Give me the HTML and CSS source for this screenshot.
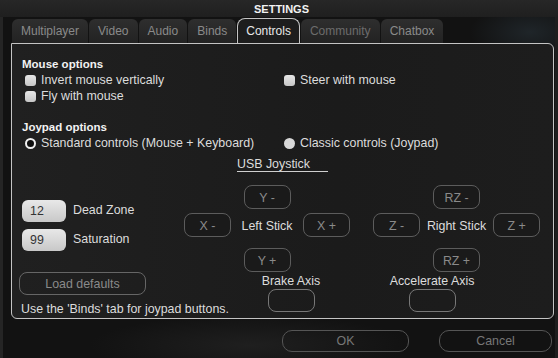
FILE: index.html
```html
<!DOCTYPE html>
<html>
<head>
<meta charset="utf-8">
<link rel="stylesheet" href="styles.css">
</head>
<body>
<div class="window">
  <div class="titlebar">SETTINGS</div>
  <div class="tabs">
    <div class="tab">Multiplayer</div>
    <div class="tab">Video</div>
    <div class="tab">Audio</div>
    <div class="tab">Binds</div>
    <div class="tab active">Controls</div>
    <div class="tab dim">Community</div>
    <div class="tab">Chatbox</div>
  </div>
  <div class="panel">
    <div class="heading first">Mouse options</div>
    <div class="opts">
      <div class="check"><span class="box"></span>Invert mouse vertically</div>
      <div class="check"><span class="box"></span>Steer with mouse</div>
      <div class="check"><span class="box"></span>Fly with mouse</div>
    </div>
    <div class="heading joy">Joypad options</div>
    <div class="opts">
      <div class="check"><span class="radio on"></span>Standard controls (Mouse + Keyboard)</div>
      <div class="check"><span class="radio"></span>Classic controls (Joypad)</div>
    </div>
    <div class="usb">USB Joystick</div>
    <div class="sticks">
      <div class="fields">
        <div class="field"><div class="input">12</div><span>Dead Zone</span></div>
        <div class="field"><div class="input">99</div><span>Saturation</span></div>
      </div>
      <div class="stick">
        <div class="jb top">Y -</div>
        <div class="jb left">X -</div>
        <div class="stick-label">Left Stick</div>
        <div class="jb right">X +</div>
        <div class="jb bottom">Y +</div>
      </div>
      <div class="stick second">
        <div class="jb top">RZ -</div>
        <div class="jb left">Z -</div>
        <div class="stick-label">Right Stick</div>
        <div class="jb right">Z +</div>
        <div class="jb bottom">RZ +</div>
      </div>
    </div>
    <div class="bottom">
      <div class="left-col">
        <div class="btn-load">Load defaults</div>
        <div class="hint">Use the 'Binds' tab for joypad buttons.</div>
      </div>
      <div class="axis">
        <div class="axis-label">Brake Axis</div>
        <div class="axis-box"></div>
      </div>
      <div class="axis accel">
        <div class="axis-label">Accelerate Axis</div>
        <div class="axis-box"></div>
      </div>
    </div>
  </div>
  <div class="footer">
    <div class="fbtn ok">OK</div>
    <div class="fbtn cancel">Cancel</div>
  </div>
</div>
</body>
</html>
```
FILE: styles.css
```css
html, body {
  margin: 0;
  padding: 0;
}
body {
  width: 558px;
  height: 358px;
  overflow: hidden;
  background: #121212;
  font-family: "Liberation Sans", Arial, sans-serif;
  font-size: 12.4px;
  color: #dcdcdc;
}
.window {
  width: 558px;
  height: 358px;
  display: flex;
  flex-direction: column;
  background:
    radial-gradient(ellipse 60px 30px at 530px 32px, #1f2529 0%, rgba(31,37,41,0) 100%),
    radial-gradient(ellipse 160px 30px at 250px 345px, #1f1f1f 0%, rgba(31,31,31,0) 100%),
    #121212;
  box-shadow: inset 3px 0 0 #252525, inset -3px 0 0 #1e1e1e;
}
.titlebar {
  height: 17px;
  line-height: 18px;
  background: linear-gradient(#272727, #1f1f1f);
  text-align: center;
  padding-left: 5px;
  font-weight: bold;
  font-size: 11px;
  color: #f2f2f2;
}
.tabs {
  display: flex;
  align-items: flex-end;
  gap: 1px;
  height: 24px;
  margin-top: 2px;
  padding-left: 12px;
  font-size: 12px;
}
.tab {
  box-sizing: border-box;
  height: 24px;
  line-height: 25px;
  padding: 0 9px;
  border-radius: 6px 6px 0 0;
  background: linear-gradient(#2e2e2e, #222222);
  color: #8a8a8a;
}
.tab.dim {
  color: #6c6c6c;
}
.tab.active {
  height: 25px;
  padding: 0 8px;
  border: 1px solid #c4c4c4;
  border-bottom: none;
  border-radius: 8px 8px 0 0;
  background: #1d1d1d;
  color: #e8e8e8;
}
.panel {
  box-sizing: border-box;
  width: 543px;
  height: 276px;
  margin-left: 11px;
  border: 1px solid #c4c4c4;
  border-radius: 0 6px 6px 6px;
  background: linear-gradient(90deg, #202020, #1b1b1b 60%, #1d1d1d);
}
.heading {
  font-weight: bold;
  font-size: 11.5px;
  line-height: 16px;
  padding-left: 10px;
  color: #f2f2f2;
}
.heading.first {
  margin-top: 12px;
}
.heading.joy {
  margin-top: 15px;
}
.opts {
  display: grid;
  grid-template-columns: 259px 1fr;
  padding-left: 13px;
}
.check {
  display: flex;
  align-items: center;
  gap: 5px;
  height: 16px;
  line-height: 17px;
  white-space: nowrap;
}
.box {
  width: 11px;
  height: 11px;
  border-radius: 3px;
  background: linear-gradient(#e6e6e6, #c6c6c6);
}
.radio {
  box-sizing: border-box;
  width: 11px;
  height: 11px;
  border-radius: 50%;
  background: #d8d8d8;
}
.radio.on {
  background: #0e0e0e;
  border: 2.5px solid #f0f0f0;
}
.usb {
  box-sizing: border-box;
  width: 91px;
  height: 16px;
  margin: 5px 0 0 225px;
  line-height: 17px;
  border-bottom: 1px solid #cfcfcf;
  white-space: nowrap;
}
.sticks {
  display: flex;
  height: 80px;
  margin-top: 13px;
}
.fields {
  box-sizing: border-box;
  width: 172px;
  padding-left: 10px;
  display: flex;
  flex-direction: column;
  justify-content: center;
  gap: 6px;
}
.field {
  display: flex;
  align-items: center;
  gap: 7px;
  line-height: 23px;
}
.input {
  box-sizing: border-box;
  width: 44px;
  height: 22px;
  line-height: 23px;
  padding-left: 8px;
  border-radius: 6px;
  background: linear-gradient(#e8e8e8, #c8c8c8);
  color: #333;
}
.stick {
  display: grid;
  grid-template-columns: 47px 72px 47px;
  grid-template-rows: 24px 24px 24px;
  row-gap: 4px;
}
.stick.second {
  margin-left: 23px;
  grid-template-columns: 47px 73px 47px;
}
.jb {
  box-sizing: border-box;
  width: 47px;
  height: 24px;
  padding-top: 1px;
  border: 1px solid #5c5c5c;
  border-radius: 8px;
  background: #1a1a1a;
  color: #8a8a8a;
  display: flex;
  align-items: center;
  justify-content: center;
}
.jb.top { grid-column: 2; grid-row: 1; justify-self: center; }
.jb.left { grid-column: 1; grid-row: 2; }
.jb.right { grid-column: 3; grid-row: 2; }
.jb.bottom { grid-column: 2; grid-row: 3; justify-self: center; }
.stick-label {
  grid-column: 2;
  grid-row: 2;
  padding-top: 2px;
  display: flex;
  align-items: center;
  justify-content: center;
  white-space: nowrap;
}
.bottom {
  display: flex;
  margin-top: 7px;
}
.left-col {
  box-sizing: border-box;
  width: 234px;
  padding-left: 7px;
}
.btn-load {
  box-sizing: border-box;
  width: 127px;
  height: 23px;
  line-height: 22px;
  border: 1px solid #666;
  border-radius: 8px;
  text-align: center;
  color: #8a8a8a;
}
.hint {
  margin: 5px 0 0 2px;
  line-height: 18px;
  white-space: nowrap;
}
.axis {
  width: 90px;
  text-align: center;
}
.axis.accel {
  width: 100px;
  margin-left: 46px;
}
.axis-label {
  height: 15px;
  line-height: 18px;
  white-space: nowrap;
}
.axis-box {
  box-sizing: border-box;
  width: 47px;
  height: 23px;
  margin: 2px auto 0;
  border: 1px solid #777;
  border-radius: 8px;
}
.footer {
  display: flex;
  justify-content: flex-end;
  gap: 30px;
  padding-right: 6px;
  margin-top: 11px;
}
.fbtn {
  box-sizing: border-box;
  height: 22px;
  line-height: 21px;
  border: 1px solid #555;
  border-radius: 10px;
  text-align: center;
  color: #777;
}
.fbtn.ok { width: 127px; }
.fbtn.cancel { width: 113px; }
```
